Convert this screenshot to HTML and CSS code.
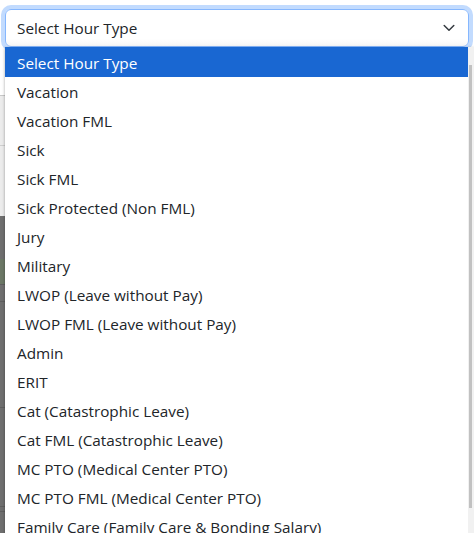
FILE: index.html
```html
<!DOCTYPE html>
<html lang="en">
<head>
<meta charset="utf-8">
<title>Select Hour Type</title>
<link rel="stylesheet" href="styles.css">
</head>
<body>
<div class="page">
  <div class="bg-top"></div>
  <div class="bg-light">
    <div class="bg-light-a"></div>
    <div class="bg-light-b"></div>
  </div>
  <div class="bg-dark">
    <div class="dk dk-1"></div>
    <div class="dk dk-green"></div>
    <div class="dk dk-2"></div>
    <div class="dk dk-3"></div>
    <div class="dk dk-4"></div>
    <div class="dk dk-5"></div>
  </div>
</div>

<div class="select">
  <span class="select-value">Select Hour Type</span>
  <svg class="chevron" width="12" height="8" viewBox="0 0 12 8" aria-hidden="true">
    <path d="M1.2 1.5 L6 6.2 L10.8 1.5" fill="none" stroke="#343a40" stroke-width="1.5" stroke-linecap="round" stroke-linejoin="round"/>
  </svg>
</div>

<div class="dropdown">
  <ul class="options">
    <li class="option selected">Select Hour Type</li>
    <li class="option">Vacation</li>
    <li class="option">Vacation FML</li>
    <li class="option">Sick</li>
    <li class="option">Sick FML</li>
    <li class="option">Sick Protected (Non FML)</li>
    <li class="option">Jury</li>
    <li class="option">Military</li>
    <li class="option">LWOP (Leave without Pay)</li>
    <li class="option">LWOP FML (Leave without Pay)</li>
    <li class="option">Admin</li>
    <li class="option">ERIT</li>
    <li class="option">Cat (Catastrophic Leave)</li>
    <li class="option">Cat FML (Catastrophic Leave)</li>
    <li class="option">MC PTO (Medical Center PTO)</li>
    <li class="option">MC PTO FML (Medical Center PTO)</li>
    <li class="option">Family Care (Family Care &amp; Bonding Salary)</li>
  </ul>
  <div class="scrollbar"><div class="thumb"></div></div>
</div>
</body>
</html>
```

FILE: styles.css
```css
html, body {
  margin: 0;
  padding: 0;
  height: 100%;
  overflow: hidden;
}
body {
  font-family: "Open Sans", "Noto Sans", sans-serif;
  color: #212529;
  background: #ffffff;
}
.page {
  display: flex;
  flex-direction: column;
  height: 533px;
}
.bg-top {
  height: 95px;
  background: #ffffff;
  border-bottom: 1px solid #c8c8c8;
}
.bg-light {
  height: 120px;
  background: #ececec;
  display: flex;
  flex-direction: column;
}
.bg-light-a {
  height: 49px;
  border-bottom: 1px solid #cfcfcf;
}
.bg-dark {
  flex: 1;
  background: #6f6f6f;
  display: flex;
  flex-direction: column;
}
.dk-1 { height: 43px; }
.dk-green { height: 25px; background: #6c7866; border-bottom: 1px solid #5f5f5f; }
.dk-2 { height: 16px; border-bottom: 1px solid #5f5f5f; }
.dk-3 { height: 105px; border-bottom: 1px solid #5f5f5f; }
.dk-4 { height: 98px; border-bottom: 1px solid #5f5f5f; }
.dk-5 { height: 4px; border-bottom: 1px solid #5f5f5f; }

.select {
  position: absolute;
  top: 9px;
  left: 5px;
  width: 464px;
  height: 38px;
  box-sizing: border-box;
  border: 1px solid #86b7fe;
  border-radius: 6px;
  box-shadow: 0 0 0 4px rgba(13, 110, 253, 0.25);
  background: linear-gradient(#ffffff 80%, #f6f6f6);
  display: flex;
  align-items: center;
  justify-content: space-between;
  padding: 0 13px 0 11px;
  font-size: 15.3px;
}
.chevron {
  display: block;
}

.dropdown {
  position: absolute;
  top: 47px;
  left: 5px;
  right: 0;
  height: 490px;
  background: #ffffff;
  box-shadow: 0 1px 3px rgba(0, 0, 0, 0.35);
  display: flex;
}
.options {
  list-style: none;
  margin: 0;
  padding: 0;
  flex: 1;
  font-size: 15.3px;
}
.option {
  height: 28px;
  padding-top: 1px;
  line-height: 29px;
  padding-left: 12px;
  white-space: nowrap;
}
.option.selected {
  background: #1967d2;
  color: #ffffff;
  height: 29px;
  line-height: 30px;
}
.scrollbar {
  width: 5px;
  background: #f1f1f1;
  padding-top: 18px;
  padding-left: 1px;
}
.thumb {
  width: 3px;
  height: 443px;
  background: #c1c1c1;
}
```
